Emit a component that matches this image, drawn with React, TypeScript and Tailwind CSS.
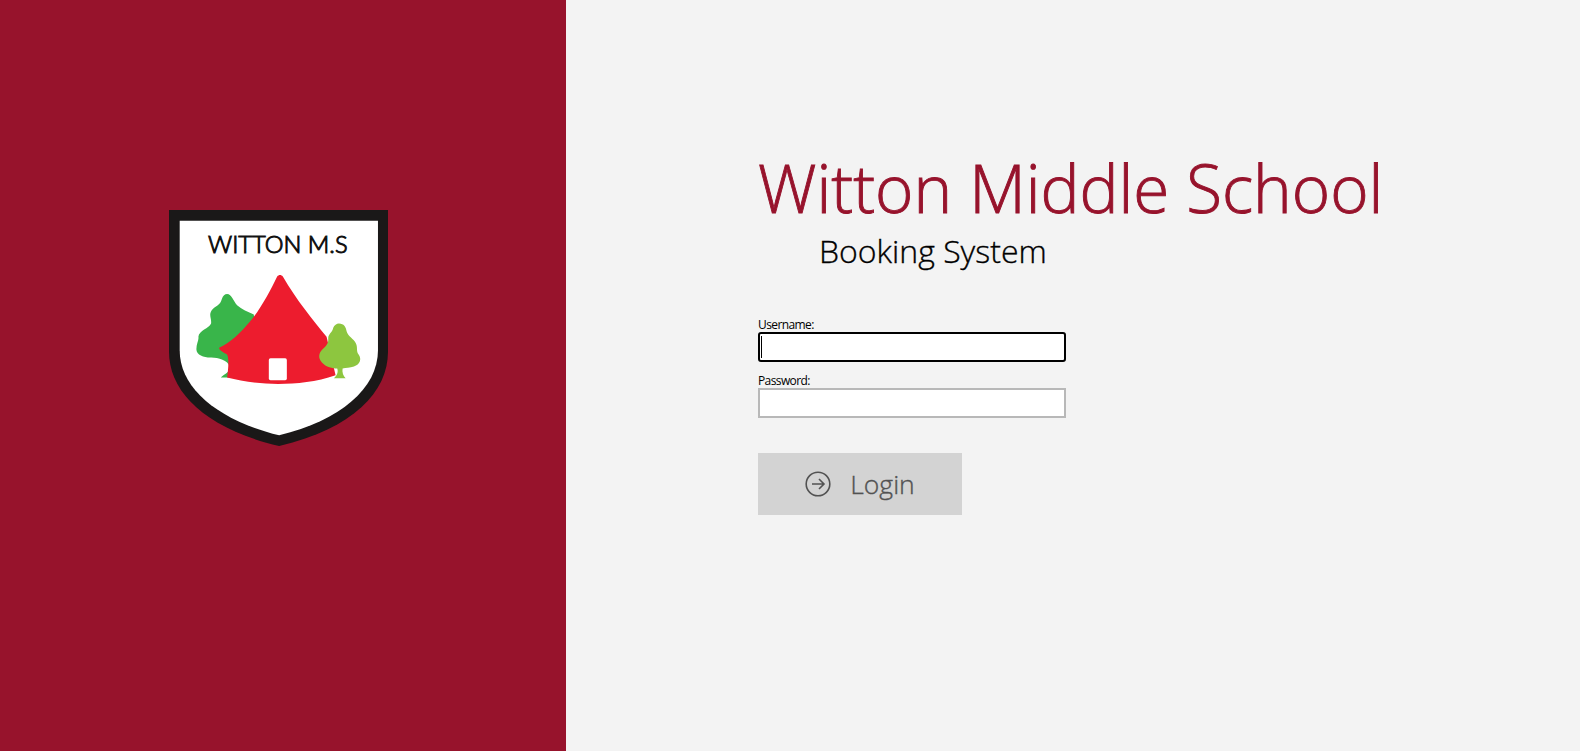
import React from "react";

function Crest() {
  return (
    <svg width="219" height="236" viewBox="58 45 656 707" className="block">
      <path d="M58 45H714V470C714 590 610 700 388 752C166 700 58 590 58 470Z" fill="#1a1818" />
      <path d="M90 77H684V465C684 580 570 675 388 720C206 675 90 580 90 465Z" fill="#fff" />
      <text x="384" y="174" textAnchor="middle" textLength="418" lengthAdjust="spacingAndGlyphs" fontFamily="Lato, sans-serif" fontWeight="300" fontSize="72" stroke="#111" strokeWidth="3" fill="#111">WITTON M.S</text>
      <path d="M232 297C246 297 250 318 262 330C275 342 295 350 312 358L320 440L260 500V547H213C225 535 242 530 240 515C235 495 205 487 185 487C165 488 140 480 140 462C140 445 148 435 146 425C148 405 178 400 184 385C186 370 176 360 186 345C196 332 212 330 216 312C220 302 225 297 232 297Z" fill="#39b54a" />
      <path d="M382 244C387 238 394 238 399 244C440 315 490 375 530 425L557 540C500 560 440 566 385 566C330 566 275 558 232 547C236 520 238 490 232 478C222 472 208 466 208 458C240 445 275 410 300 380C330 345 360 290 382 244Z" fill="#ed1c2e" />
      <rect x="357" y="489" width="54" height="66" rx="5" fill="#fff" />
      <path d="M567 385C582 385 588 396 590 408C594 424 612 430 618 445C624 458 618 468 626 478C636 492 630 508 612 514C600 518 588 518 578 520C576 532 580 542 587 549H552C560 542 566 532 562 520C548 520 528 516 516 502C504 488 506 474 518 462C530 452 536 444 535 430C535 416 548 412 550 398C553 390 560 385 567 385Z" fill="#8dc63f" />
    </svg>
  );
}

function Field({ label, focused }: { label: string; focused?: boolean }) {
  return (
    <div className="flex flex-col">
      <label className="text-[12px] leading-[14px] text-black font-['Open_Sans',sans-serif] tracking-[-0.6px]">{label}</label>
      {focused ? (
        <div className="w-[308px] h-[30px] bg-white border-2 border-black rounded-[3px] flex items-center pl-[1px]">
          <div className="w-px h-[22px] bg-black" />
        </div>
      ) : (
        <div className="w-[308px] h-[30px] bg-white border-2 border-[#b8b8b8]" />
      )}
    </div>
  );
}

export default function App() {
  return (
    <div className="flex w-full h-[751px] overflow-hidden bg-[#f3f3f3] font-['Open_Sans',sans-serif]">
      <div className="w-[566px] h-full bg-[#97132c] pl-[169px] pt-[210px] shrink-0">
        <Crest />
      </div>
      <div className="flex-1 pl-[192px] pt-[147px]">
        <h1 className="text-[65.5px] leading-[82px] font-light [-webkit-text-stroke:0.9px_#97132c] text-[#97132c] whitespace-nowrap">Witton Middle School</h1>
        <p className="text-[32px] leading-[40px] text-black font-light [-webkit-text-stroke:0.35px_#000] pl-[61px] mt-[2px]">Booking System</p>
        <div className="mt-[47px] flex flex-col gap-[12px]">
          <Field label="Username:" focused />
          <Field label="Password:" />
        </div>
        <div className="mt-[35px] w-[204px] h-[62px] bg-[#d3d3d3] flex items-center justify-center gap-[19px] text-[#525252]">
          <svg width="26" height="26" viewBox="0 0 26 26" fill="none" stroke="currentColor" strokeWidth="1.6">
            <circle cx="13" cy="13" r="11.8" />
            <path d="M7 13H19M14 8l5 5-5 5" />
          </svg>
          <span className="text-[26.5px] font-light [-webkit-text-stroke:0.35px_#525252] leading-none">Login</span>
        </div>
      </div>
    </div>
  );
}
